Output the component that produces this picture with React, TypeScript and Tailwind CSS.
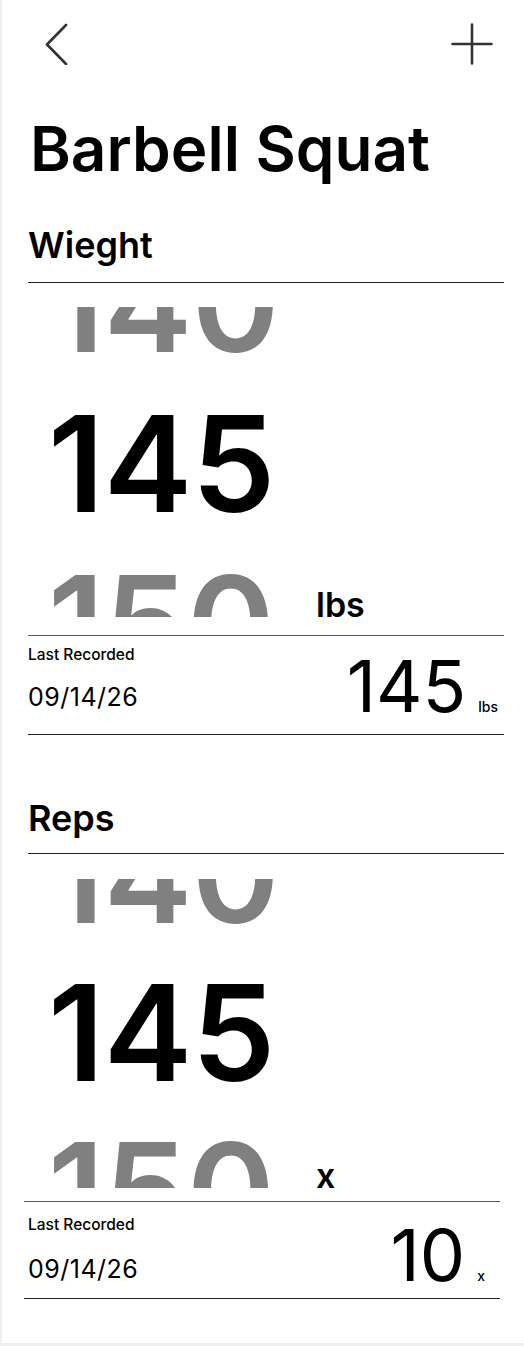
import React from "react";

const font = { fontFamily: "Inter, 'Noto Sans', sans-serif" };

type PickerProps = {
  values: string[];
  unit: string;
  clipHeight: string;
  rowHeight: string;
};

const Picker = ({ values, unit, clipHeight, rowHeight }: PickerProps) => (
  <div className={`flex items-end ${clipHeight}`}>
    <div className={`w-[280px] overflow-hidden ${clipHeight}`}>
      <div className="flex flex-col pl-[20px] -mt-[83px]">
        {values.map((v, i) => (
          <div
            key={v + i}
            className={`${rowHeight} text-[133px] font-semibold tracking-[-0.5px] ${
              i === 1 ? "text-black" : "text-[#808080]"
            }`}
          >
            {v}
          </div>
        ))}
      </div>
    </div>
    <div className="ml-[8px] text-[34px] font-semibold leading-[24px] text-black">
      {unit}
    </div>
  </div>
);

type LastProps = {
  value: string;
  unit: string;
  box: string;
  dateGap: string;
  rightPad: string;
};

const LastRecorded = ({ value, unit, box, dateGap, rightPad }: LastProps) => (
  <div
    className={`flex justify-between border-t-[1.5px] border-b-[1.5px] border-t-[#5a5a5a] border-b-[#222] ${box}`}
  >
    <div className="flex flex-col">
      <div className="text-[15.5px] leading-none font-medium text-black">Last Recorded</div>
      <div className={`${dateGap} text-[25px] leading-none tracking-[0.5px] text-black`}>09/14/26</div>
    </div>
    <div className={`flex items-baseline ${rightPad}`}>
      <span className="text-[72px] leading-none text-black">{value}</span>
      <span className="ml-[12px] text-[14px] leading-none font-medium text-black">{unit}</span>
    </div>
  </div>
);

export default function App() {
  return (
    <div className="min-h-screen bg-[#eeeeee] pb-[3px]" style={font}>
      <div className="ml-[2px] h-[1343px] bg-white">
        <div className="flex justify-between pt-[23px] pl-[42px] pr-[31px]">
          <svg width="24" height="42" viewBox="0 0 24 42" fill="none">
            <path d="M22 2 L3 21.5 L22 41" stroke="#333" strokeWidth="2.6" strokeLinecap="round" strokeLinejoin="round" />
          </svg>
          <svg width="42" height="42" viewBox="0 0 42 42" fill="none">
            <path d="M21 1.5 V40.5 M1.5 21 H40.5" stroke="#333" strokeWidth="2.6" strokeLinecap="round" />
          </svg>
        </div>

        <div className="pl-[26px] pr-[20px]">
          <h1 className="mt-[53px] ml-[2px] text-[62px] font-semibold leading-none text-black">
            Barbell Squat
          </h1>

          {/* weight */}
          <div className="mt-[47px] text-[36px] font-semibold leading-none pb-[19px] border-b border-[#222]">
            Wieght
          </div>
          <div className="mt-[24px]">
            <Picker values={["140", "145", "150"]} unit="lbs" clipHeight="h-[310px]" rowHeight="h-[160px] leading-[160px]" />
          </div>
          <div className="mt-[18px]">
            <LastRecorded
              value="145"
              unit="lbs"
              box="h-[100px] pt-[11px]"
              dateGap="mt-[22px]"
              rightPad="pt-[3px] pr-[6px]"
            />
          </div>

          {/* reps */}
          <div className="mt-[65px] text-[36px] font-semibold leading-none pb-[17px] border-b border-[#222]">
            Reps
          </div>
          <div className="mt-[25px]">
            <Picker values={["140", "145", "150"]} unit="x" clipHeight="h-[309px]" rowHeight="h-[158px] leading-[158px]" />
          </div>
          <div className="mt-[13px] -ml-[4px] mr-[4px]">
            <LastRecorded
              value="10"
              unit="x"
              box="h-[97.5px] pt-[15px] pl-[4px]"
              dateGap="mt-[24px]"
              rightPad="pt-[2px] pr-[15px]"
            />
          </div>
        </div>
      </div>
    </div>
  );
}
